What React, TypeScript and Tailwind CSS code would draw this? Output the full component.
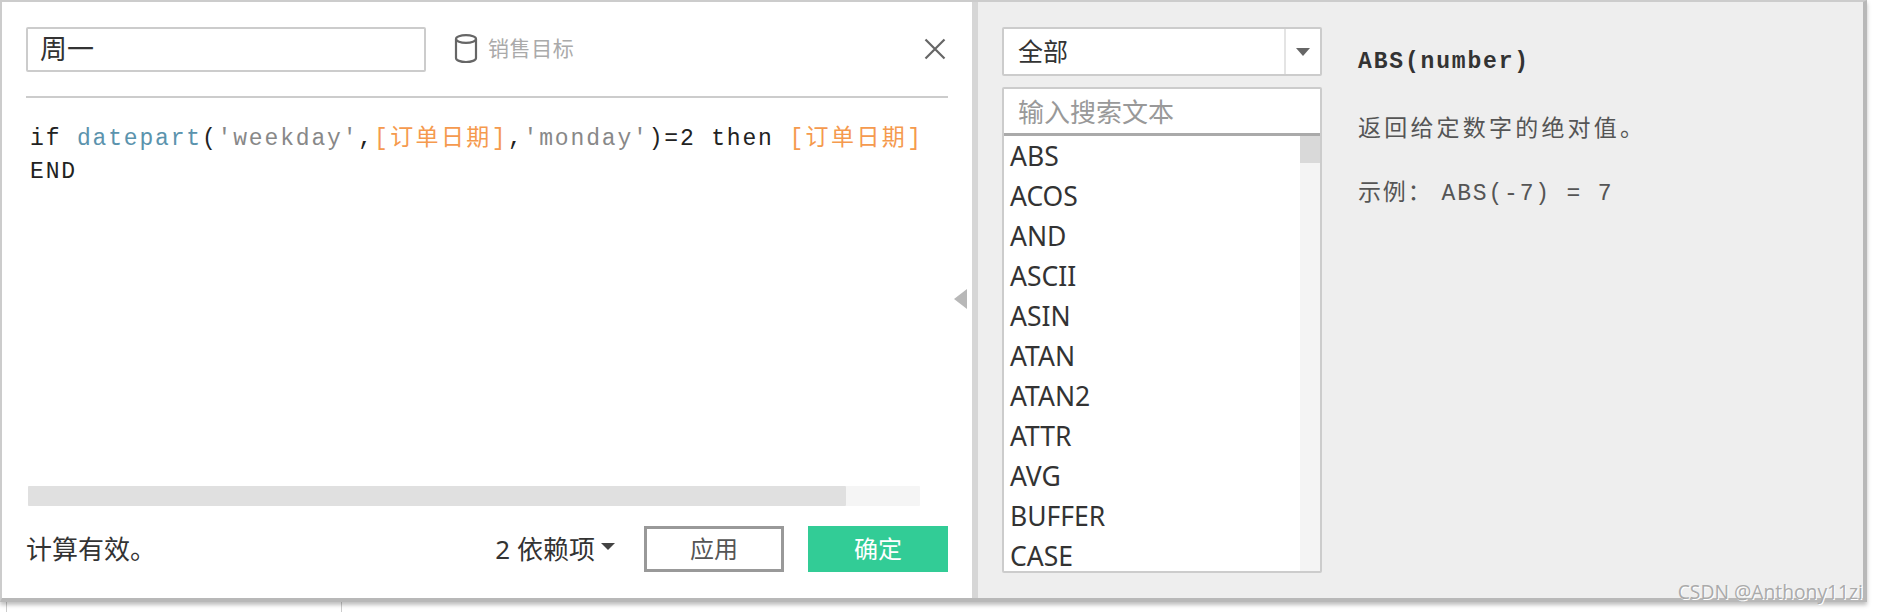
const functions = ["ABS", "ACOS", "AND", "ASCII", "ASIN", "ATAN", "ATAN2", "ATTR", "AVG", "BUFFER", "CASE"];

const sans = "font-['Noto_Sans','Noto_Sans_CJK_SC',sans-serif]";
const mono = "font-['Liberation_Mono','Noto_Sans_CJK_SC',monospace] text-[23px] tracking-[1.83px]";

function Editor() {
  return (
    <div className={`flex flex-col w-[970px] bg-white pl-[24px] pr-[24px] pt-[25px] pb-[26px] ${sans}`}>
      {/* name row */}
      <div className="flex items-center h-[44px]">
        <div className="w-[400px] h-[45px] flex items-center pl-[12px] border-2 border-[#cccccc] rounded-[2px] text-[27px] text-[#333333]">周一</div>
        <svg width="24" height="30" viewBox="0 0 24 30" fill="none" stroke="#666666" strokeWidth="2.2" className="ml-[28px]">
          <ellipse cx="12" cy="5" rx="10" ry="3.8" />
          <path d="M2 5v19c0 2.4 4.5 4 10 4s10-1.6 10-4V5" />
        </svg>
        <span className="ml-[10px] text-[21px] tracking-[0.6px] text-[#aaaaaa]">销售目标</span>
        <svg width="22" height="22" viewBox="0 0 22 22" fill="none" stroke="#666666" strokeWidth="2.2" className="ml-auto mr-[2px]">
          <path d="M1.5 1.5l19 19M20.5 1.5l-19 19" />
        </svg>
      </div>
      <div className="h-[2px] bg-[#cccccc] mt-[25px]" />

      {/* formula */}
      <div className={`flex-1 mt-[25px] pl-[4px] whitespace-nowrap leading-[33px] text-[#222222] ${mono}`}>
        <div>
          if <span className="text-[#5b93ad]">datepart</span>(<span className="text-[#888888]">'weekday'</span>,
          <span className="text-[#f59a4e] tracking-[2.4px]">[订单日期]</span>,<span className="text-[#888888]">'monday'</span>)=2 then{" "}
          <span className="text-[#f59a4e] tracking-[2.4px]">[订单日期]</span>
        </div>
        <div>END</div>
      </div>

      {/* horizontal scrollbar */}
      <div className="ml-[2px] w-[892px] h-[20px] bg-[#f5f5f5] rounded-[1px]">
        <div className="w-[818px] h-full bg-[#e0e0e0] rounded-[1px]" />
      </div>

      {/* footer */}
      <div className="flex items-center h-[46px] mt-[20px] text-[26px] text-[#333333]">
        <span>计算有效。</span>
        <span className="ml-auto">2 依赖项</span>
        <span className="ml-[6px] mb-[6px] w-0 h-0 border-x-[7px] border-x-transparent border-t-[7px] border-t-[#444444]" />
        <button className="ml-[29px] w-[140px] h-[46px] border-[3px] border-[#999999] text-[24px] text-[#555555]">应用</button>
        <button className="ml-[24px] w-[140px] h-[46px] bg-[#32cc96] text-[24px] text-white">确定</button>
      </div>
    </div>
  );
}

function FunctionPicker() {
  return (
    <div className="flex flex-col w-[320px] gap-[11px]">
      <div className="flex h-[49px] bg-white border-2 border-[#cccccc] rounded-[2px]">
        <span className="flex-1 flex items-center pl-[14px] text-[25px] text-[#333333]">全部</span>
        <span className="w-[36px] flex items-center justify-center border-l-2 border-[#e4e4e4]">
          <span className="w-0 h-0 border-x-[7px] border-x-transparent border-t-[8px] border-t-[#666666]" />
        </span>
      </div>
      <div className="flex flex-col h-[486px] bg-white border-2 border-[#cccccc] rounded-[2px]">
        <div className="h-[47px] shrink-0 flex items-center pl-[14px] pt-[2px] border-b-[3px] border-[#aaaaaa] text-[26px] text-[#999999]">输入搜索文本</div>
        <div className="flex flex-1 min-h-0">
          <ul className="flex-1 pt-[1px] pl-[6px]">
            {functions.map((name) => (
              <li key={name} className="h-[40px] flex items-center text-[26.5px] text-[#333333]">{name}</li>
            ))}
          </ul>
          <div className="w-[20px] bg-[#f4f4f4]">
            <div className="h-[27px] bg-[#d9d9d9]" />
          </div>
        </div>
      </div>
    </div>
  );
}

function FunctionHelp() {
  return (
    <div className="ml-[36px] pt-[20px] text-[#555555]">
      <div className={`font-bold leading-[30px] text-[#333333] ${mono}`}>ABS(number)</div>
      <div className={`mt-[37px] leading-[32px] ${mono} tracking-[3.2px]`}>返回给定数字的绝对值。</div>
      <div className={`mt-[32px] leading-[32px] ${mono}`}>示例：<span className="ml-[9px]">ABS(-7) = 7</span></div>
    </div>
  );
}

export default function App() {
  return (
    <div className="relative w-[1878px] h-[612px] overflow-hidden bg-white">
      <div className="relative flex w-[1867px] h-[602px] border-t-2 border-l-2 border-[#cccccc] border-r-4 border-r-[#b8b8b8] border-b-4 border-b-[#b8b8b8] shadow-[0_3px_4px_rgba(0,0,0,0.25)]">
        <Editor />
        <div className="w-[6px] bg-[#d6d6d6]" />
        <div className={`flex flex-1 bg-[#eeeeee] pl-[24px] pt-[25px] ${sans}`}>
          <FunctionPicker />
          <FunctionHelp />
        </div>
        {/* collapse handle */}
        <span className="absolute left-[952px] top-[287px] w-0 h-0 border-y-[10px] border-y-transparent border-r-[13px] border-r-[#b8b8b8]" />
      </div>
      {/* sheet edge peeking out below the dialog */}
      <div className="ml-[6px] w-[336px] h-[10px] border-x border-[#cccccc]" />
      <span className="absolute right-[15px] bottom-[7px] font-['Open_Sans',sans-serif] text-[19.3px] leading-[26px] text-[#aaaaaa] [text-shadow:1px_1px_0_#ffffff]">CSDN @Anthony11zi</span>
    </div>
  );
}
